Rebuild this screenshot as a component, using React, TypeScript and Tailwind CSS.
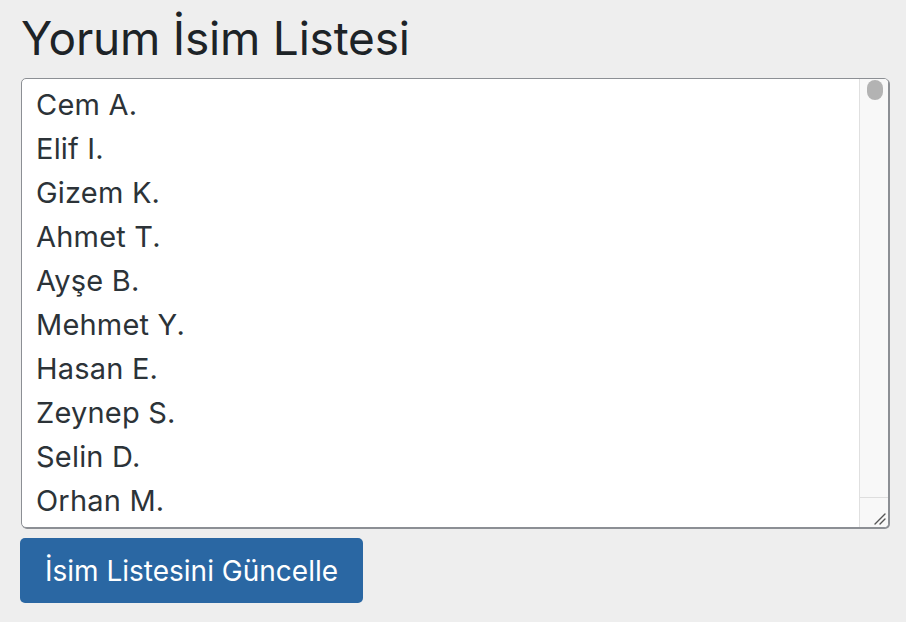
import React from 'react'

const names = [
  'Cem A.',
  'Elif I.',
  'Gizem K.',
  'Ahmet T.',
  'Ayşe B.',
  'Mehmet Y.',
  'Hasan E.',
  'Zeynep S.',
  'Selin D.',
  'Orhan M.',
  'Burak Ç.',
  'Deniz Ö.',
]

const App = () => {
  return (
    <div className="min-h-screen bg-[#eeeeee] px-[20px] pt-[7px] font-['Inter','Noto_Sans',sans-serif] text-[#1d2327]">
      <h1 className="text-[46px] leading-[62px] tracking-[-0.2px] pl-[1px]">Yorum İsim Listesi</h1>

      <div className="mt-[9px] ml-[1px] flex h-[450px] w-[868px] overflow-hidden rounded-[5px] border border-[#8c8f94] bg-white shadow-[1px_1px_0_#8c8f94]">
        <div className="flex-1 overflow-hidden pl-[14px] pt-[4px] text-[#2c3338]">
          {names.map((n) => (
            <div key={n} className="text-[29px] leading-[44px] tracking-[0.2px]">{n}</div>
          ))}
        </div>

        {/* fake scrollbar */}
        <div className="flex w-[29px] flex-col border-l border-[#e0e0e0] bg-[#f8f8f8]">
          <div className="flex-1 px-[7px] pt-[1px]">
            <div className="h-[20px] w-[16px] rounded-full bg-[#b3b3b3]" />
          </div>
          <div className="relative h-[30px] border-t border-[#dedede] bg-[#f8f8f8]">
            <svg className="absolute bottom-[2px] right-[2px]" width="14" height="14" viewBox="0 0 14 14">
              <path d="M13 3 L3 13 M13 8 L8 13" stroke="#555" strokeWidth="1.4" strokeLinecap="round" />
            </svg>
          </div>
        </div>
      </div>

      <button
        type="button"
        className="mt-[10px] flex h-[65px] w-[343px] items-center justify-center whitespace-nowrap rounded-[5px] bg-[#2a67a3] text-[28px] leading-[36px] text-white"
      >
        İsim Listesini Güncelle
      </button>
    </div>
  )
}

export default App
